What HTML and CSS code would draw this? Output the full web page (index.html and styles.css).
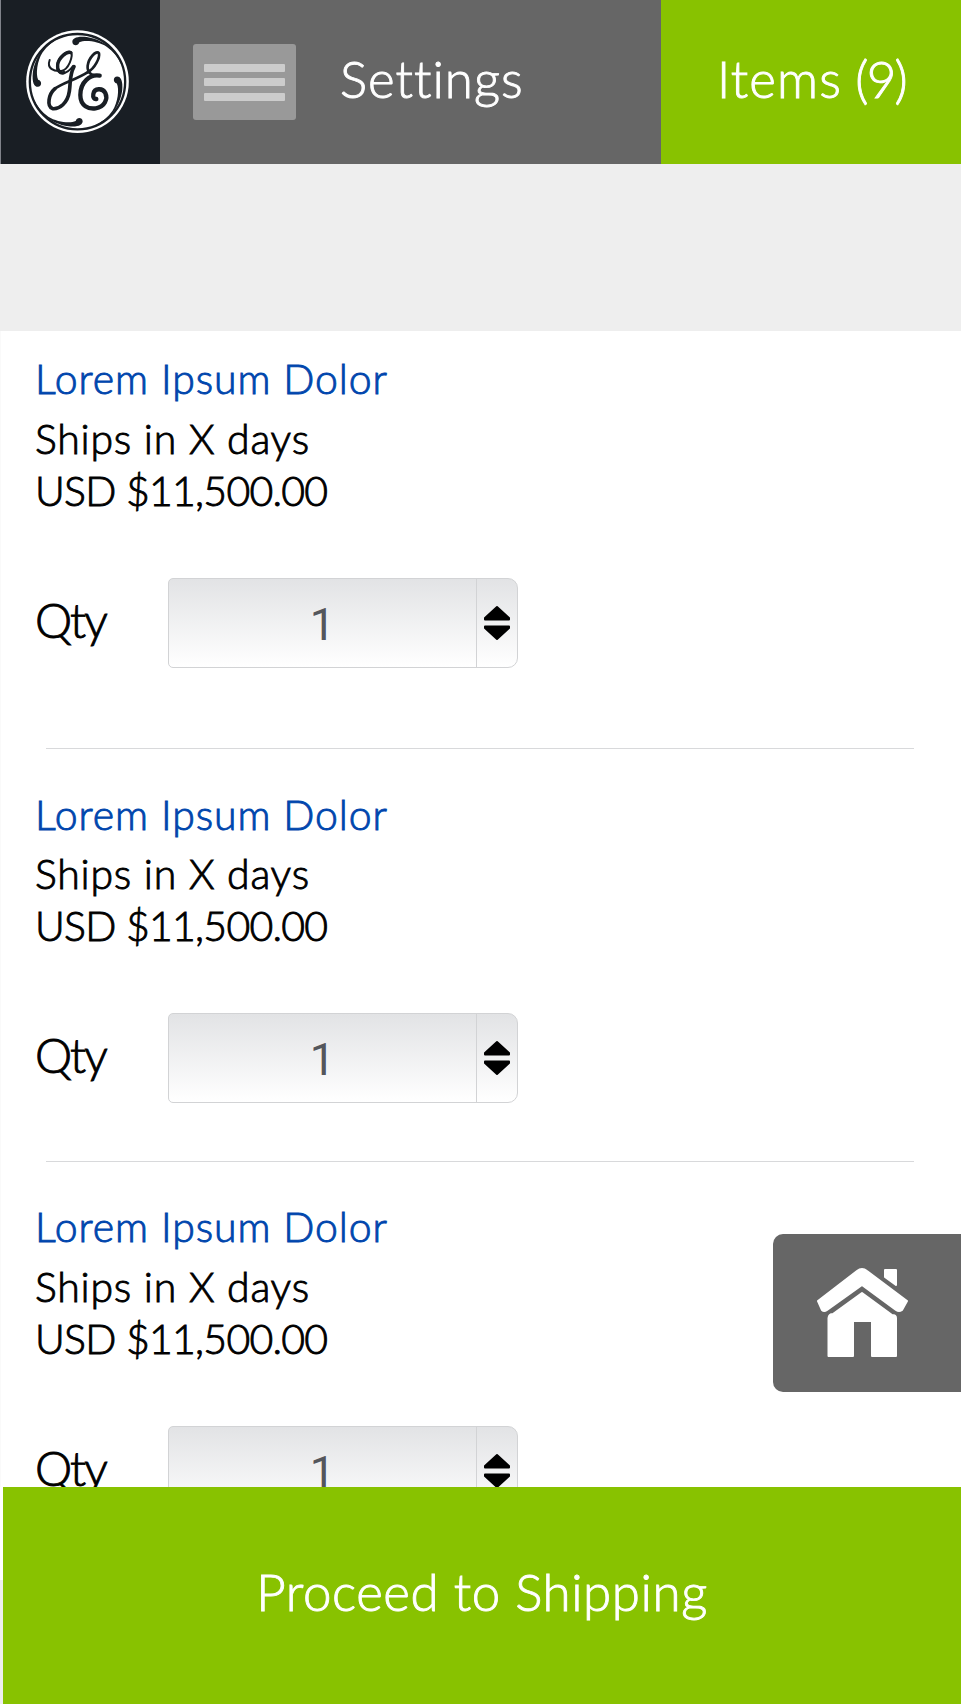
FILE: index.html
```html
<!DOCTYPE html>
<html lang="en">
<head>
<meta charset="utf-8">
<title>Items</title>
<link rel="stylesheet" href="styles.css">
</head>
<body>
<div class="screen">
  <header class="topbar">
    <div class="brand">
      <svg class="logo" viewBox="0 0 510 490" aria-label="GE">
        <circle cx="232.500" cy="245" r="154" fill="#fff"/>
        <circle cx="232.500" cy="245" r="143" fill="none" stroke="#191e24" stroke-width="7"/>
        <g fill="#191e24">
          <path id="swash" d="M248 364 C247 351 230 351 227 363 C210 371 170 366 145 350 C125 336 110 318 101 296 C110 335 150 370 205 379 C235 382 248 375 248 364Z"/>
          <use href="#swash" transform="rotate(90 232.500 245)"/>
          <use href="#swash" transform="rotate(180 232.500 245)"/>
          <use href="#swash" transform="rotate(270 232.500 245)"/>
        </g>
        <g fill="none" stroke="#191e24" stroke-linecap="round" stroke-linejoin="round">
          <path stroke-width="6" d="M149 180 C140 205 160 215 184 213 C206 209 220 168 213 157 C202 150 177 169 172 191 C168 211 179 222 190 220 C203 217 212 208 219 198"/>
          <path stroke-width="10" d="M213 158 C200 152 176 174 173 194 C171 214 182 221 192 218"/>
          <path stroke-width="11" d="M222 200 C208 225 212 250 208 274 C203 310 178 328 158 326 C139 318 146 282 165 266"/>
          <path stroke-width="8" d="M165 266 C188 248 228 240 267 214"/>
          <path stroke-width="8" d="M263 217 C285 205 300 173 297 160 C289 149 266 174 263 197 C261 216 272 228 299 227"/>
          <path stroke-width="13" d="M299 227 C270 222 241 246 241 285 C241 318 266 328 287 325 C315 321 324 296 316 279 C308 263 283 264 280 282 C278 293 283 298 289 297"/>
        </g>
      </svg>
    </div>
    <div class="menu">
      <button class="burger" aria-label="Menu"><i></i><i></i><i></i></button>
      <span class="menu-label">Settings</span>
    </div>
    <div class="cart"><span class="cart-label">Items <span class="count">(9)</span></span></div>
  </header>
  <div class="band"></div>
  <main class="list">
    <section class="item first">
      <h2 class="name">Lorem Ipsum Dolor</h2>
      <p class="ships">Ships in X days</p>
      <p class="price">USD $11,500.00</p>
      <div class="qty"><span class="qty-label">Qty</span>
        <div class="picker"><span class="value">1</span><span class="arrows"><svg viewBox="0 0 28 36"><path d="M14 2 26 13V14.500H2V13ZM14 34 26 23V21.500H2V23Z"/></svg></span></div>
      </div>
    </section>
    <section class="item second">
      <h2 class="name">Lorem Ipsum Dolor</h2>
      <p class="ships">Ships in X days</p>
      <p class="price">USD $11,500.00</p>
      <div class="qty"><span class="qty-label">Qty</span>
        <div class="picker"><span class="value">1</span><span class="arrows"><svg viewBox="0 0 28 36"><path d="M14 2 26 13V14.500H2V13ZM14 34 26 23V21.500H2V23Z"/></svg></span></div>
      </div>
    </section>
    <section class="item third">
      <h2 class="name">Lorem Ipsum Dolor</h2>
      <p class="ships">Ships in X days</p>
      <p class="price">USD $11,500.00</p>
      <div class="qty"><span class="qty-label">Qty</span>
        <div class="picker"><span class="value">1</span><span class="arrows"><svg viewBox="0 0 28 36"><path d="M14 2 26 13V14.500H2V13ZM14 34 26 23V21.500H2V23Z"/></svg></span></div>
      </div>
    </section>
  </main>
  <footer class="proceed"><span>Proceed to Shipping</span></footer>
  <a class="home" aria-label="Home">
    <svg viewBox="0 0 188 158">
      <g fill="#fff" stroke="#fff" stroke-width="2" stroke-linejoin="round">
        <path d="M45 67 84 37Q89 33 94 37L134 67 129 76Q126 78 123 76L89 51 54 76Q51 78 49 76Z"/>
        <path d="M112 36H123V51L112 43Z"/>
        <path d="M89 59 119 81Q123 81 123 84V122H99V87H80V122H55.500V84Q56 80 60 80Z"/>
      </g>
    </svg>
  </a>
</div>
</body>
</html>
```
FILE: styles.css
```css
* { box-sizing: border-box; }
body { margin: 0; background: #fff; font-family: Lato, "Open Sans", sans-serif; font-weight: 300; color: #000; -webkit-text-stroke: 0.9px; }
.screen { position: relative; width: 961px; height: 1704px; display: flex; flex-direction: column; overflow: hidden; }
.topbar { display: flex; flex: none; height: 164px; color: #fff; font-size: 51px; line-height: 60px; background: #666; }
.brand { width: 160px; background: #191e24; border-left: 1px solid #80838a; }
.logo { display: block; width: 170px; height: 163.333px; margin-left: -1px; }
.menu { width: 501px; display: flex; align-items: center; padding-left: 33px; background: #666; }
.burger { width: 103px; height: 76px; border: 0; border-radius: 3px; background: #999; padding: 0 11px; display: flex; flex-direction: column; justify-content: center; gap: 6.500px; }
.burger i { height: 8px; background: #ccc; border-radius: 1px; }
.menu-label { margin-left: 44px; padding-bottom: 7px; white-space: nowrap; letter-spacing: 1px; }
.cart { width: 300px; background: #88c200; display: flex; align-items: center; padding-left: 56px; white-space: nowrap; }
.cart-label { padding-bottom: 7px; letter-spacing: 1.200px; word-spacing: -2px; }
.count { letter-spacing: -1.800px; }
.band { flex: none; height: 167px; background: #eee; }
.list { flex: 1 1 0; min-height: 0; overflow: hidden; border-left: 1px solid #fafafa; padding-left: 34px; }
.item { position: relative; }
.item::after { content: ""; position: absolute; left: 11px; width: 868px; bottom: 0; height: 1px; background: #d8d9db; }
.first { height: 418px; padding-top: 22px; }
.second { height: 413px; padding-top: 40px; }
.third { height: 413px; padding-top: 39px; }
.name, .ships, .price { margin: 0; font-size: 41px; line-height: 52px; font-weight: 300; white-space: nowrap; }
.name { color: #0046ad; letter-spacing: 0.900px; }
.ships { margin-top: 8px; letter-spacing: 0.750px; }
.second .ships { margin-top: 7px; }
.price { letter-spacing: -0.750px; }
.qty { display: flex; align-items: center; margin-top: 61px; }
.qty-label { width: 133px; font-size: 47px; line-height: 60px; letter-spacing: -2px; padding-bottom: 7px; }
.picker { width: 350px; height: 90px; display: flex; border: 1px solid #d2d3d5; border-radius: 5px 10px 10px 5px; background: linear-gradient(#e2e3e5, #fff); }
.value { width: 307px; text-align: center; font: 45px/92px Roboto, sans-serif; color: #54565b; -webkit-text-stroke: 0; }
.arrows { flex: 1; border-left: 1px solid #d2d3d5; display: flex; align-items: center; justify-content: center; }
.arrows svg { width: 28px; height: 36px; stroke: #000; stroke-width: 2; stroke-linejoin: round; }
.proceed { flex: none; height: 217px; padding: 0 0 7px 3px; background: linear-gradient(#fff 93px, #eee 93px) 0 0 / 3px 100% no-repeat #88c200; color: #fff; font-size: 51px; line-height: 60px; letter-spacing: 0.600px; display: flex; align-items: center; justify-content: center; }
.home { position: absolute; right: 0; top: 1234px; width: 188px; height: 158px; background: #666; border-radius: 10px 0 0 10px; }
.home svg { display: block; width: 188px; height: 158px; }
```
